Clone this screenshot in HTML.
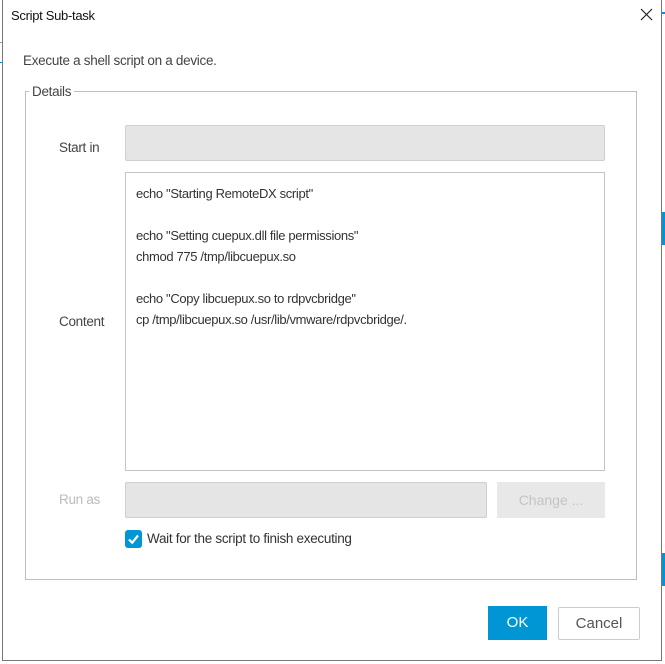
<!DOCTYPE html>
<html><head><meta charset="utf-8"><style>
*{margin:0;padding:0;box-sizing:border-box}
body{width:665px;height:664px;background:#fff;position:relative;overflow:hidden;font-family:"Liberation Sans",sans-serif;color:#333;font-size:13px}
.a{position:absolute}
.lbl{font-size:13.5px;color:#444;letter-spacing:-0.3px;line-height:16px}
.inp{background:#e5e5e5;border:1px solid #cfcfcf;border-radius:2px}
</style></head><body>
<div class="a" style="left:662px;top:12px;width:3px;height:2px;background:#0096d6"></div>
<div class="a" style="left:662px;top:212px;width:3px;height:33px;background:#0096d6"></div>
<div class="a" style="left:662px;top:553px;width:3px;height:33px;background:#0096d6"></div>
<div class="a" style="left:0;top:42px;width:2px;height:1px;background:#999"></div>
<div class="a" style="left:0;top:62px;width:2px;height:1px;background:#0096d6"></div>
<div class="a" style="left:2px;top:0;width:660px;height:661px;border:1px solid #777;border-top:none;background:#fff"></div>
<div class="a lbl" style="left:11px;top:8px;color:#111;font-size:13px">Script Sub-task</div>
<svg class="a" style="left:640px;top:8px" width="13" height="13" viewBox="0 0 13 13"><path d="M1 1L12 12M12 1L1 12" stroke="#222" stroke-width="1.2"/></svg>
<div class="a lbl" style="left:23px;top:53px;color:#444">Execute a shell script on a device.</div>
<div class="a" style="left:25px;top:91px;width:612px;height:489px;border:1px solid #bdbdbd"></div>
<div class="a lbl" style="left:29px;top:84px;background:#fff;padding:0 3px;color:#444">Details</div>
<div class="a lbl" style="left:59px;top:140px">Start in</div>
<div class="a inp" style="left:125px;top:125px;width:480px;height:36px"></div>
<div class="a lbl" style="left:59px;top:314px">Content</div>
<div class="a" style="left:125px;top:172px;width:480px;height:299px;border:1px solid #c4c4c4;padding:10px 0 0 10px;font-size:13px;line-height:21px;color:#333;letter-spacing:-0.35px">echo "Starting RemoteDX script"<br><br>echo "Setting cuepux.dll file permissions"<br>chmod 775 /tmp/libcuepux.so<br><br>echo "Copy libcuepux.so to rdpvcbridge"<br>cp /tmp/libcuepux.so /usr/lib/vmware/rdpvcbridge/.</div>
<div class="a lbl" style="left:59px;top:492px;color:#bbb">Run as</div>
<div class="a inp" style="left:125px;top:482px;width:362px;height:36px"></div>
<div class="a" style="left:497px;top:482px;width:108px;height:36px;background:#e8e8e8;color:#c4c4c4;font-size:14px;text-align:center;line-height:36px">Change ...</div>
<div class="a" style="left:125px;top:530px;width:17px;height:18px;background:#0096d6;border-radius:3px"></div>
<svg class="a" style="left:125px;top:530px" width="17" height="18" viewBox="0 0 17 18"><path d="M4 9.5L7.2 12.7L13 5.5" stroke="#fff" stroke-width="2.2" fill="none"/></svg>
<div class="a lbl" style="left:147px;top:531px;color:#333">Wait for the script to finish executing</div>
<div class="a" style="left:488px;top:606px;width:59px;height:34px;background:#0096d6;color:#fff;font-size:15px;text-align:center;line-height:34px">OK</div>
<div class="a" style="left:558px;top:607px;width:82px;height:33px;border:1px solid #ccc;border-radius:2px;color:#555;font-size:15px;text-align:center;line-height:31px">Cancel</div>
</body></html>
